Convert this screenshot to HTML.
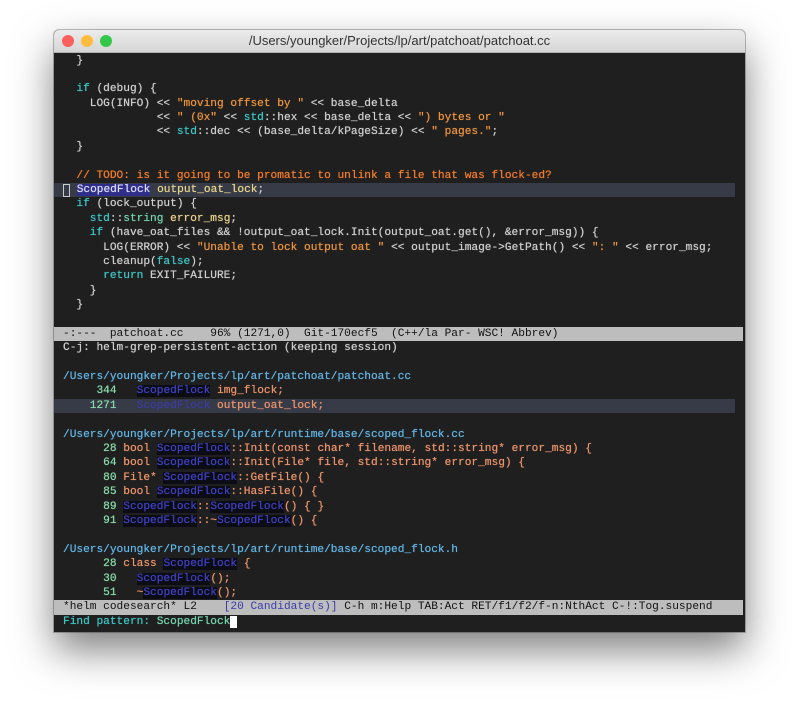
<!DOCTYPE html>
<html><head><meta charset="utf-8"><style>
html,body{margin:0;padding:0;background:#fff;width:799px;height:709px;overflow:hidden}
.win{position:absolute;left:54px;top:30px;width:691px;height:602px;background:#1f1f1f;border-radius:5px 5px 0 0;box-shadow:0 18px 40px rgba(0,0,0,.5),0 0 0 1px rgba(0,0,0,.25);overflow:hidden}
.tb{position:absolute;left:0;top:0;width:691px;height:22px;background:linear-gradient(#ececec,#d6d6d6);border-bottom:1px solid #b0b0b0;font:13px "Liberation Sans",sans-serif;color:#333;text-align:center;line-height:22px}
.dot{position:absolute;top:5px;width:12px;height:12px;border-radius:50%}
pre{position:absolute;left:9px;top:23.5px;margin:0;font:11.17px/14.4px "Liberation Mono",monospace;color:#cfcfcf;text-shadow:0 0 0.6px currentColor}
.r{display:block;height:14.4px;white-space:pre;overflow:hidden}
.k{color:#3ec6c6}.s{color:#ec943e}.c{color:#f27c2a}.v{color:#ead38a}.t{color:#74d4ac}
.hl{background:#363b47;margin-left:-9px;padding-left:9px;width:672px}
.sf{background:#2e2e8a;color:#dcdcf4}
.ml{background:#bdbdbd;color:#111;margin-left:-9px;padding-left:9px;width:680px;text-shadow:none}
.p{color:#62b4e4}.n{color:#8adcaa}.m{color:#4040c0;background:#0c0c14}.o{color:#ec946c}.pr{color:#3ec6c6}
.cur{display:inline-block;width:5px;height:11px;border:1px solid #ccc;vertical-align:top;margin-top:1px;box-sizing:content-box}
</style></head><body>
<div class="win">
<div class="tb"><div class="dot" style="left:8px;background:#fc605c"></div><div class="dot" style="left:27px;background:#fdbc40"></div><div class="dot" style="left:46px;background:#34c84a"></div>/Users/youngker/Projects/lp/art/patchoat/patchoat.cc</div>
<pre><span class="r">  }</span><span class="r"> </span><span class="r">  <span class="k">if</span> (debug) {</span><span class="r">    LOG(INFO) &lt;&lt; <span class="s">"moving offset by "</span> &lt;&lt; base_delta</span><span class="r">              &lt;&lt; <span class="s">" (0x"</span> &lt;&lt; <span class="k">std</span>::hex &lt;&lt; base_delta &lt;&lt; <span class="s">") bytes or "</span></span><span class="r">              &lt;&lt; <span class="k">std</span>::dec &lt;&lt; (base_delta/kPageSize) &lt;&lt; <span class="s">" pages."</span>;</span><span class="r">  }</span><span class="r"> </span><span class="r">  <span class="c">// TODO: is it going to be promatic to unlink a file that was flock-ed?</span></span><span class="r hl"><span class="cur"></span> <span class="sf">ScopedFlock</span> <span class="v">output_oat_lock</span>;</span><span class="r">  <span class="k">if</span> (lock_output) {</span><span class="r">    <span class="k">std</span>::<span class="t">string</span> <span class="v">error_msg</span>;</span><span class="r">    <span class="k">if</span> (have_oat_files &amp;&amp; !output_oat_lock.Init(output_oat.get(), &amp;error_msg)) {</span><span class="r">      LOG(ERROR) &lt;&lt; <span class="s">"Unable to lock output oat "</span> &lt;&lt; output_image-&gt;GetPath() &lt;&lt; <span class="s">": "</span> &lt;&lt; error_msg;</span><span class="r">      cleanup(<span class="k">false</span>);</span><span class="r">      <span class="k">return</span> EXIT_FAILURE;</span><span class="r">    }</span><span class="r">  }</span><span class="r"> </span><span class="r ml">-:---  patchoat.cc    96% (1271,0)  Git-170ecf5  (C++/la Par- WSC! Abbrev)</span><span class="r">C-j: helm-grep-persistent-action (keeping session)</span><span class="r"> </span><span class="r p">/Users/youngker/Projects/lp/art/patchoat/patchoat.cc</span><span class="r">     <span class="n">344</span>   <span class="m">ScopedFlock</span> <span class="o">img_flock;</span></span><span class="r hl">    <span class="n">1271</span>   <span class="m" style="background:none;color:#3c3ca0">ScopedFlock</span> <span class="o">output_oat_lock;</span></span><span class="r"> </span><span class="r p">/Users/youngker/Projects/lp/art/runtime/base/scoped_flock.cc</span><span class="r">      <span class="n">28</span> <span class="o">bool</span> <span class="m">ScopedFlock</span><span class="o">::Init(const char* filename, std::string* error_msg) {</span></span><span class="r">      <span class="n">64</span> <span class="o">bool</span> <span class="m">ScopedFlock</span><span class="o">::Init(File* file, std::string* error_msg) {</span></span><span class="r">      <span class="n">80</span> <span class="o">File*</span> <span class="m">ScopedFlock</span><span class="o">::GetFile() {</span></span><span class="r">      <span class="n">85</span> <span class="o">bool</span> <span class="m">ScopedFlock</span><span class="o">::HasFile() {</span></span><span class="r">      <span class="n">89</span> <span class="m">ScopedFlock</span><span class="o">::</span><span class="m">ScopedFlock</span><span class="o">() { }</span></span><span class="r">      <span class="n">91</span> <span class="m">ScopedFlock</span><span class="o">::~</span><span class="m">ScopedFlock</span><span class="o">() {</span></span><span class="r"> </span><span class="r p">/Users/youngker/Projects/lp/art/runtime/base/scoped_flock.h</span><span class="r">      <span class="n">28</span> <span class="o">class</span> <span class="m">ScopedFlock</span> <span class="o">{</span></span><span class="r">      <span class="n">30</span>   <span class="m">ScopedFlock</span><span class="o">();</span></span><span class="r">      <span class="n">51</span>   <span class="o">~</span><span class="m">ScopedFlock</span><span class="o">();</span></span><span class="r ml">*helm codesearch* L2    <span style="color:#3a3ab0">[20 Candidate(s)]</span> C-h m:Help TAB:Act RET/f1/f2/f-n:NthAct C-!:Tog.suspend</span><span class="r"><span class="pr">Find pattern: </span><span class="t">ScopedFlock</span><span style="background:#fff">&nbsp;</span></span></pre>
</div>
</body></html>
